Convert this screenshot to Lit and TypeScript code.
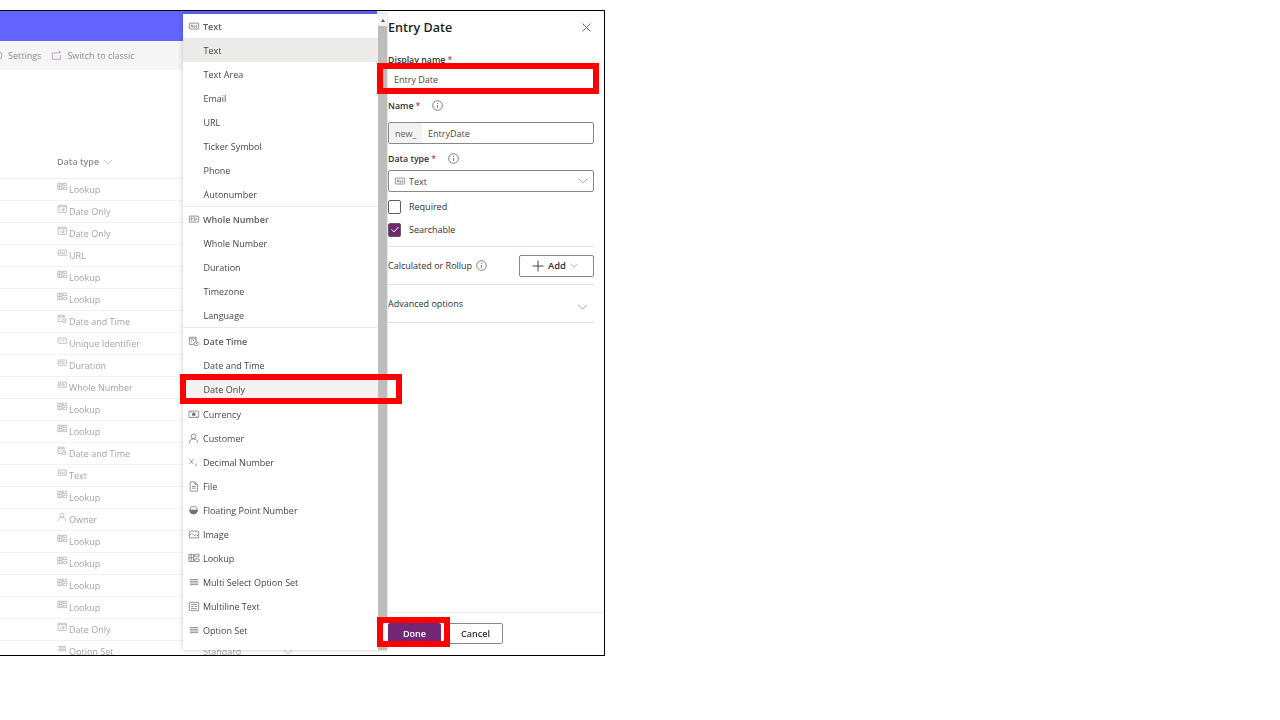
import { LitElement, css, html, svg } from 'lit';
import { customElement } from 'lit/decorators.js';

const icons: Record<string, unknown> = {
  text: svg`<rect x="1.5" y="2.5" width="11" height="7" rx=".5"/><path d="M3.5 7.5l1-3 1 3M7 4.5v3h1.5M10.5 5h-1v2.500h1"/>`,
  number: svg`<rect x="1.5" y="2.500" width="11" height="7" rx=".5"/><path d="M3.500 4.500h1.500v1h-1.500v1.500h1.500M6.500 4.500h1.500v3h-1.500M9.500 4.500v3"/>`,
  lookup: svg`<path d="M1 1.500h5.500v8.500h-5.500zM1 5.700h5.500M3.700 1.500v8.500M8 1.500h5v3h-5zM8 7h5v3h-5zM6.500 3h1.500M6.500 8.500h1.500"/>`,
  date: svg`<rect x="1.500" y="1.500" width="11" height="9.500" rx=".5"/><path d="M1.500 3.500h11M5 6v3M7.500 6h2v1.500h-2v1.500h2"/>`,
  datetime: svg`<path d="M9.500 6v-4.500h-8v8.500h5M1.500 3.500h8M3.500 5.500h1M6 5.500h1M3.500 7.500h1"/><circle cx="9.500" cy="9" r="2.500"/><path d="M9.500 7.800v1.200h1"/>`,
  guid: svg`<rect x="1.500" y="2.500" width="11" height="7" rx=".5"/><path d="M3.500 6h2M7 6h3"/>`,
  owner: svg`<circle cx="6.500" cy="4" r="2.800"/><path d="M1.500 12c0-3 2-5 5-5s5 2 5 5"/>`,
  options: svg`<path d="M2 3h10M2 5h10M2 7h10M2 9h10"/>`,
  currency: svg`<rect x="1" y="2.500" width="11.500" height="7.500" rx=".5"/><circle cx="6.700" cy="6.200" r="1.800" fill="currentColor"/><path d="M2.500 4h1.500M9.500 8.500h1.500"/>`,
  decimal: svg`<path d="M2 3l4 5M6 3l-4 5M9.500 8v3"/>`,
  file: svg`<path d="M2.500 1h5.500l3 3v8h-8.500zM8 1v3h3M4.500 6.500h4.500M4.500 8.500h4.500"/>`,
  float: svg`<circle cx="6.500" cy="6" r="4.500"/><path d="M2 6a4.500 4.500 0 0 0 9 0z" fill="currentColor"/>`,
  image: svg`<rect x="1.500" y="2.500" width="11" height="8" rx=".5"/><path d="M1.500 8l3-3 3 3 2-1.500 3 2"/>`,
  multiline: svg`<rect x="1.500" y="1.500" width="11" height="10" rx=".5"/><path d="M3.500 4h7M3.500 6.500h3M8 6.500h2.500M3.500 9h7"/>`,
  switch: svg`<path d="M9 3.500h-7.500v7.500h9.500v-5M10 1v3M8.500 2.500h3"/>`,
};

const icon = (name: string) => html`<svg class="ico" viewBox="0 0 14 13">${icons[name]}</svg>`;
const chevron = html`<svg class="chev" viewBox="0 0 12 7"><path d="M1 1l5 5 5-5"/></svg>`;
const info = html`<svg class="info" viewBox="0 0 11 11"><circle cx="5.500" cy="5.500" r="4.800"/><path d="M5.500 5v3M5.500 3v1"/></svg>`;

const rows: [string, string][] = [
  ['lookup', 'Lookup'],
  ['date', 'Date Only'],
  ['date', 'Date Only'],
  ['text', 'URL'],
  ['lookup', 'Lookup'],
  ['lookup', 'Lookup'],
  ['datetime', 'Date and Time'],
  ['guid', 'Unique Identifier'],
  ['number', 'Duration'],
  ['number', 'Whole Number'],
  ['lookup', 'Lookup'],
  ['lookup', 'Lookup'],
  ['datetime', 'Date and Time'],
  ['text', 'Text'],
  ['lookup', 'Lookup'],
  ['owner', 'Owner'],
  ['lookup', 'Lookup'],
  ['lookup', 'Lookup'],
  ['lookup', 'Lookup'],
  ['lookup', 'Lookup'],
  ['date', 'Date Only'],
  ['options', 'Option Set'],
];

const groups = [
  { icon: 'text', name: 'Text', items: ['Text', 'Text Area', 'Email', 'URL', 'Ticker Symbol', 'Phone', 'Autonumber'] },
  { icon: 'number', name: 'Whole Number', items: ['Whole Number', 'Duration', 'Timezone', 'Language'] },
  { icon: 'datetime', name: 'Date Time', items: ['Date and Time', 'Date Only'] },
];

const singles: [string, string][] = [
  ['currency', 'Currency'],
  ['owner', 'Customer'],
  ['decimal', 'Decimal Number'],
  ['file', 'File'],
  ['float', 'Floating Point Number'],
  ['image', 'Image'],
  ['lookup', 'Lookup'],
  ['options', 'Multi Select Option Set'],
  ['multiline', 'Multiline Text'],
  ['options', 'Option Set'],
];

@customElement('app-root')
export class AppRoot extends LitElement {
  static styles = css`
    :host {
      display: block;
      height: 720px;
      background: #fff;
      font-family: 'Open Sans', 'Liberation Sans', sans-serif;
      font-size: 9px;
      color: #323130;
    }
    .frame {
      position: relative;
      top: 10px;
      box-sizing: border-box;
      display: flex;
      width: 605px;
      height: 646px;
      border: 1px solid #000;
      border-left: none;
      overflow: hidden;
    }
    .ico {
      width: 12px;
      height: 11px;
      flex: none;
      fill: none;
      stroke: currentColor;
      stroke-width: 0.9;
      color: #737373;
    }
    .chev {
      width: 10px;
      height: 6px;
      fill: none;
      stroke: #8a8886;
      stroke-width: 0.9;
    }
    .info {
      width: 11px;
      height: 11px;
      flex: none;
      fill: none;
      stroke: #605e5c;
      stroke-width: 0.8;
    }

    /* page behind the menu */
    .page {
      width: 388px;
      flex: none;
      color: #a6a4a2;
      filter: blur(0.3px);
    }
    .brand {
      height: 30px;
      margin-right: 11px;
      background: #6264ff;
    }
    .tools {
      display: flex;
      align-items: center;
      height: 29px;
      background: #f5f5f5;
      color: #8f8d8b;
    }
    .tools .gear {
      width: 3px;
      height: 11px;
      margin-right: 5px;
      color: #9a9896;
    }
    .tools .switch {
      margin-left: 10px;
      margin-right: 4px;
      color: #b28bb0;
    }
    .head {
      display: flex;
      align-items: flex-end;
      gap: 4px;
      box-sizing: border-box;
      height: 109px;
      padding: 0 0 10px 57px;
      border-bottom: 1px solid #efefef;
      font-weight: 600;
      color: #8f8d8b;
    }
    .head .chev {
      margin-bottom: 3px;
      stroke: #b5b3b1;
    }
    .row {
      display: flex;
      align-items: center;
      box-sizing: border-box;
      height: 22px;
      width: 183px;
      padding-left: 57px;
      border-bottom: 1px solid #f3f3f3;
    }
    .row .ico {
      width: 10.500px;
      height: 10px;
      margin: -5px 1.500px 0 0;
      color: #a8a6a4;
    }
    .standard {
      position: absolute;
      left: 203px;
      top: 634px;
      display: flex;
      gap: 42px;
      align-items: center;
      color: #a6a4a2;
    }
    .standard .chev {
      stroke: #b5b3b1;
    }

    /* data type dropdown, lies over the page */
    .menu {
      position: absolute;
      left: 183px;
      top: 3px;
      display: flex;
      width: 205px;
      height: 636px;
      background: #fff;
      box-shadow: 0 0 5px rgba(0, 0, 0, 0.22);
    }
    .list {
      flex: 1;
      color: #484644;
      filter: blur(0.3px);
    }
    .group {
      border-bottom: 1px solid #edebe9;
    }
    .group:nth-child(2) {
      margin-bottom: 1px;
    }
    .group:nth-child(3) {
      border-bottom: none;
      margin-bottom: 1px;
    }
    .opt,
    .title {
      display: flex;
      align-items: center;
      gap: 3px;
      height: 24px;
      padding-left: 5px;
    }
    .title {
      font-weight: 600;
      color: #605e5c;
    }
    .opt.sub {
      padding-left: 20.500px;
    }
    .opt.on {
      background: #edebe9;
    }
    .opt.soft {
      background: #f3f2f1;
    }
    .scroll {
      display: flex;
      flex-direction: column;
      width: 10px;
      box-sizing: border-box;
      border-right: 1px solid #e6e6e6;
    }
    .arrow {
      height: 12px;
      display: flex;
      justify-content: center;
      align-items: center;
      background: #f4f4f4;
    }
    .arrow i {
      border: 2.500px solid transparent;
      border-top: none;
      border-bottom: 3px solid #555;
    }
    .thumb {
      flex: 1;
      background: #bdbdbd;
    }

    /* side panel */
    .panel {
      display: flex;
      flex-direction: column;
      flex: 1;
      min-width: 0;
      background: #fff;
      filter: blur(0.3px);
    }
    .form {
      flex: 1;
      padding-right: 10px;
    }
    .panel-head {
      display: flex;
      align-items: center;
      justify-content: space-between;
      height: 32px;
      font-size: 12.600px;
      font-weight: 600;
      color: #201f1e;
    }
    .close {
      width: 9px;
      height: 9px;
      margin-right: 3px;
      fill: none;
      stroke: #605e5c;
      stroke-width: 0.9;
    }
    .lbl {
      display: flex;
      align-items: center;
      box-sizing: border-box;
      padding-top: 2px;
      font-size: 8.800px;
      font-weight: 600;
      color: #323130;
      height: 14px;
    }
    .lbl b {
      color: #a4262c;
      font-weight: 400;
      margin-left: 2px;
    }
    .lbl .info {
      margin: -2px 0 0 12px;
    }
    .first {
      margin-top: 9px;
    }
    .input {
      display: flex;
      align-items: center;
      box-sizing: border-box;
      height: 22px;
      border: 1px solid #8a8886;
      border-radius: 2px;
      color: #484644;
    }
    .display {
      height: 18px;
      margin-top: 3px;
      padding: 3px 0 0 6px;
      border: none;
    }
    .name-lbl {
      margin-top: 11px;
    }
    .name-input {
      margin-top: 10px;
    }
    .prefix {
      display: flex;
      align-items: center;
      align-self: stretch;
      width: 33px;
      padding-left: 6px;
      box-sizing: border-box;
      margin-right: 6px;
      background: #f3f2f1;
      color: #605e5c;
    }
    .type-lbl {
      margin-top: 7px;
    }
    .select {
      margin-top: 5px;
      padding: 0 5px 0 5px;
      gap: 3px;
    }
    .select span {
      flex: 1;
    }
    .check {
      display: flex;
      align-items: center;
      gap: 8px;
      height: 23px;
    }
    .check i {
      display: flex;
      align-items: center;
      justify-content: center;
      box-sizing: border-box;
      width: 13px;
      height: 14px;
      border: 1px solid #605e5c;
      border-radius: 2px;
    }
    .check.yes i {
      background: #742774;
    }
    .check svg {
      width: 8px;
      height: 7px;
      fill: none;
      stroke: #fff;
      stroke-width: 1;
    }
    .checks {
      margin-top: 3px;
      padding-bottom: 5px;
      border-bottom: 1px solid #e1dfdd;
    }
    .calc {
      display: flex;
      align-items: center;
      justify-content: space-between;
      height: 37px;
      border-bottom: 1px solid #e1dfdd;
    }
    .calc span {
      display: flex;
      align-items: center;
      gap: 4px;
    }
    .add {
      display: flex;
      align-items: center;
      justify-content: center;
      gap: 4px;
      box-sizing: border-box;
      width: 75px;
      height: 22px;
      padding-right: 3px;
      border: 1px solid #8a8886;
      border-radius: 2px;
      font-size: 9.400px;
      font-weight: 600;
    }
    .add svg.plus {
      width: 12px;
      height: 12px;
      fill: none;
      stroke: #323130;
      stroke-width: 0.9;
    }
    .add .chev {
      width: 8px;
      height: 5px;
    }
    .adv {
      display: flex;
      align-items: center;
      justify-content: space-between;
      height: 37px;
      border-bottom: 1px solid #e1dfdd;
    }
    .adv .chev {
      width: 11px;
      margin: 6px 6px 0 0;
    }
    .foot {
      display: flex;
      gap: 7px;
      height: 43px;
      box-sizing: border-box;
      padding-top: 10px;
      border-top: 1px solid #edebe9;
    }
    .btn {
      display: flex;
      align-items: center;
      justify-content: center;
      box-sizing: border-box;
      width: 55px;
      height: 21px;
      border: 1px solid #8a8886;
      border-radius: 2px;
      font-weight: 600;
    }
    .btn.primary {
      width: 53px;
      border: none;
      background: #742774;
      color: #fff;
      box-shadow: -5px 0 0 #fff;
    }

    /* red annotation boxes drawn on top of the screenshot */
    .mark {
      position: absolute;
      box-sizing: border-box;
      border: 6px solid #f00;
    }
    .m1 {
      left: 377px;
      top: 52px;
      width: 222px;
      height: 31px;
    }
    .m2 {
      left: 180px;
      top: 363px;
      width: 222px;
      height: 30px;
    }
    .m3 {
      left: 377px;
      top: 606px;
      width: 73px;
      height: 30px;
    }
  `;

  render() {
    return html`
      <div class="frame">
        <div class="page">
          <div class="brand"></div>
          <div class="tools">
            <svg class="ico gear" viewBox="0 0 3 11"><circle cx="-2" cy="5.500" r="4"/></svg>
            <span>Settings</span>
            <svg class="ico switch" viewBox="0 0 14 13">${icons.switch}</svg>
            <span>Switch to classic</span>
          </div>
          <div class="head">Data type ${chevron}</div>
          ${rows.map(([i, t]) => html`<div class="row">${icon(i)}<span>${t}</span></div>`)}
        </div>
        <div class="standard"><span>Standard</span>${chevron}</div>

        <div class="menu">
          <div class="list">
            ${groups.map(
              (g) => html`
                <div class="group">
                  <div class="title">${icon(g.icon)}<span>${g.name}</span></div>
                  ${g.items.map(
                    (t, n) => html`<div class="opt sub ${g.name === 'Text' && n === 0 ? 'on' : ''} ${t === 'Date Only' ? 'soft' : ''}">${t}</div>`
                  )}
                </div>
              `
            )}
            ${singles.map(([i, t]) => html`<div class="opt">${icon(i)}<span>${t}</span></div>`)}
          </div>
          <div class="scroll">
            <div class="arrow"><i></i></div>
            <div class="thumb"></div>
          </div>
        </div>

        <div class="panel">
          <div class="form">
            <div class="panel-head">
              <span>Entry Date</span>
              <svg class="close" viewBox="0 0 9 9"><path d="M.5.5l8 8M8.500.5l-8 8"/></svg>
            </div>
            <div class="lbl first">Display name<b>*</b></div>
            <div class="input display">Entry Date</div>
            <div class="lbl name-lbl">Name<b>*</b>${info}</div>
            <div class="input name-input">
              <span class="prefix">new_</span><span>EntryDate</span>
            </div>
            <div class="lbl type-lbl">Data type<b>*</b>${info}</div>
            <div class="input select">${icon('text')}<span>Text</span>${chevron}</div>
            <div class="checks">
              <div class="check"><i></i>Required</div>
              <div class="check yes"><i><svg viewBox="0 0 8 7"><path d="M.5 3.500l2.500 2.500 4.500-5"/></svg></i>Searchable</div>
            </div>
            <div class="calc">
              <span>Calculated or Rollup ${info}</span>
              <div class="add">
                <svg class="plus" viewBox="0 0 12 12"><path d="M6 .5v11M.5 6h11"/></svg>
                Add ${chevron}
              </div>
            </div>
            <div class="adv"><span>Advanced options</span>${chevron}</div>
          </div>
          <div class="foot">
            <div class="btn primary">Done</div>
            <div class="btn">Cancel</div>
          </div>
        </div>

        <div class="mark m1"></div>
        <div class="mark m2"></div>
        <div class="mark m3"></div>
      </div>
    `;
  }
}
